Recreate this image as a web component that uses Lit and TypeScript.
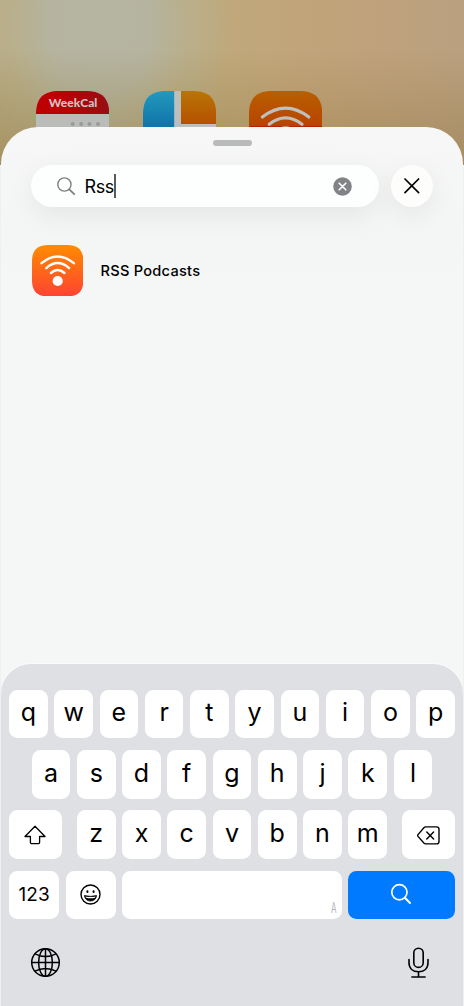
import { LitElement, html, css } from "lit";
import { customElement, property } from "lit/decorators.js";

@customElement("rss-icon")
class RssIcon extends LitElement {
  static styles = css`
    :host { display: block; }
    svg { display: block; width: 100%; height: 100%; }
  `;
  render() {
    return html`<svg viewBox="0 0 51.4 51.4">
      <defs><linearGradient id="g" x1="0" y1="0" x2="0" y2="1">
        <stop offset="0" stop-color="#ff8c00"/><stop offset="1" stop-color="#ff4332"/>
      </linearGradient></defs>
      <path fill="url(#g)" d="M16 0H35.4C46 0 51.4 5.4 51.4 16V35.4C51.4 46 46 51.4 35.4 51.4H16C5.4 51.4 0 46 0 35.4V16C0 5.4 5.4 0 16 0Z"/>
      <g fill="none" stroke="#fff" stroke-linecap="round">
        <path d="M9.5 18.2Q25.7 4.6 41.9 18.2" stroke-width="2.4"/>
        <path d="M14.3 23.1Q25.7 13.1 37.1 23.1" stroke-width="2.4"/>
        <path d="M18.9 28Q25.7 22 32.5 28" stroke-width="2.4"/>
      </g>
      <circle cx="25.7" cy="36" r="5.1" fill="#fff"/>
    </svg>`;
  }
}

@customElement("key-cap")
class KeyCap extends LitElement {
  @property() label = "";
  static styles = css`
    :host {
      display: flex; align-items: center; justify-content: center;
      box-sizing: border-box; height: 48.6px; padding-bottom: 3.6px;
      background: #fff; border-radius: 8.5px; color: #000;
      font: 400 25px/30px Inter, sans-serif;
    }
  `;
  render() {
    return html`<span>${this.label}</span>`;
  }
}

@customElement("app-root")
class AppRoot extends LitElement {
  static styles = css`
    :host {
      display: flex; flex-direction: column; height: 1006px; overflow: hidden;
      font-family: Inter, sans-serif; color: #000;
      background: #eff0f0;
    }
    svg { display: block; }
    .home {
      box-sizing: border-box; flex: none; height: 165px; padding: 91px 0 0 36.2px;
      display: flex; gap: 33.2px;
      background:
        linear-gradient(180deg, rgba(135,110,50,0) 30%, rgba(135,110,50,.4) 100%),
        radial-gradient(ellipse 130px 175px at 100px 25px, #b5b5a2 0%, rgba(181,181,162,.9) 40%, rgba(184,178,146,.55) 70%, rgba(188,174,132,0) 100%),
        linear-gradient(90deg, #b9ab82 0, #bcaa7f 190px, #c0a87b 235px, #c1a37a 330px, #baa080 464px);
    }
    .tile { flex: none; width: 73.3px; height: 73.3px; }
    .sheet {
      flex: none; box-sizing: border-box; height: 600px; margin: -37.7px .8px 0;
      border-radius: 37px 37px 0 0; padding: 13px 30.2px 0;
      background: linear-gradient(180deg, #f7f7f7 0, #f4f5f5 110px, #f5f6f6 160px, #f5f6f6 100%);
      display: flex; flex-direction: column;
    }
    .grabber { width: 39px; height: 5.6px; border-radius: 3px; background: #b9bbba; align-self: center; }
    .search { display: flex; gap: 12px; margin-top: 19.2px; }
    .field, .close {
      height: 42px; border-radius: 21px; background: #fdfefe;
      box-shadow: 0 8px 28px rgba(0,0,0,.07);
    }
    .field {
      width: 348px; box-sizing: border-box; padding: 0 27px 0 26px;
      display: flex; align-items: center;
    }
    .query { margin-left: 8.6px; font-size: 18px; line-height: 24px; letter-spacing: -.5px; padding-top: 1px; }
    .caret { width: 2px; height: 24px; background: #5a5a5a; flex: none; }
    .clear { margin-left: auto; }
    .close { width: 42px; display: grid; place-items: center; background: #fdfdfc; }
    .result { display: flex; align-items: center; gap: 17.6px; margin-top: 38px; padding-left: .6px; }
    .result rss-icon { width: 51.4px; height: 51.4px; }
    .name { font-size: 14.6px; line-height: 20px; font-weight: 550; letter-spacing: .25px; }
    .keyboard {
      flex: none; box-sizing: border-box; height: 343px; margin: -63.3px .8px 0;
      border-radius: 30px 30px 0 0; padding: 25.7px 8.2px 0; background: #dfe0e4;
      box-shadow: 0 -1px 0 #fafbfb;
      display: flex; flex-direction: column; gap: 11.8px;
    }
    .row { display: flex; gap: 6.6px; justify-content: center; }
    .row key-cap { width: 38.66px; }
    .row.spread { gap: 0; justify-content: space-between; }
    .letters { display: flex; gap: 6.6px; }
    .cap {
      box-sizing: border-box; height: 48.6px; border-radius: 8.5px; background: #fff;
      display: flex; align-items: center; justify-content: center;
    }
    .wide { width: 52.8px; padding-top: 1px; }
    .num { width: 50.3px; font-size: 19px; line-height: 24px; padding-bottom: 1px; }
    .space { width: 219.2px; justify-content: flex-end; align-items: flex-end; padding: 0 3px 4px 0; }
    .hint { font-size: 14px; line-height: 14px; color: #b4b5b8; transform: scaleX(.58); }
    .go { width: 107px; background: #007aff; padding-bottom: 3px; }
    .bar { display: flex; justify-content: space-between; align-items: center; padding: 15.4px 26px 0 21px; }
  `;

  private keys(s: string) {
    return [...s].map((k) => html`<key-cap .label=${k}></key-cap>`);
  }

  render() {
    return html`
      <div class="home">
        <svg class="tile" viewBox="0 0 73.3 73.3">
          <defs>
            <clipPath id="c"><path d="M23 0H50.3C66 0 73.3 7.3 73.3 23V73.3H0V23C0 7.3 7.3 0 23 0Z"/></clipPath>
            <linearGradient id="r"><stop offset=".3" stop-color="#bd0003"/><stop offset="1" stop-color="#960e14"/></linearGradient>
          </defs>
          <g clip-path="url(#c)">
            <rect width="73.3" height="73.3" fill="#babcb9"/>
            <rect width="73.3" height="23" fill="url(#r)"/>
            <g fill="#999b99"><circle cx="36.7" cy="33" r="2"/><circle cx="45.2" cy="33" r="2"/><circle cx="53.5" cy="33" r="2"/><circle cx="62" cy="33" r="2"/></g>
          </g>
          <text x="12.8" y="16" font-family="Lato, sans-serif" font-weight="900" font-size="12" fill="#cbc5c1" textLength="48.6">WeekCal</text>
        </svg>
        <svg class="tile" viewBox="0 0 73.3 73.3">
          <defs>
            <linearGradient id="b" x1="0" y1="0" x2="0" y2="1"><stop offset="0" stop-color="#2399bd"/><stop offset=".5" stop-color="#0f73a9"/></linearGradient>
            <linearGradient id="o" x1="0" y1="0" x2="0" y2="1"><stop offset="0" stop-color="#b87506"/><stop offset="1" stop-color="#b65100"/></linearGradient>
          </defs>
          <g clip-path="url(#c)">
            <rect width="73.3" height="73.3" fill="#bdbfbd"/>
            <rect width="31.2" height="73.3" fill="url(#b)"/>
            <rect x="38" width="35.3" height="33" fill="url(#o)"/>
          </g>
        </svg>
        <svg class="tile" viewBox="0 0 73.3 73.3">
          <defs><linearGradient id="d" x1="0" y1="0" x2="0" y2="1"><stop offset="0" stop-color="#b95f00"/><stop offset=".5" stop-color="#b74300"/></linearGradient></defs>
          <g clip-path="url(#c)">
            <rect width="73.3" height="73.3" fill="url(#d)"/>
            <rect y="35.2" width="73.3" height="3" fill="#b21d06"/>
          </g>
          <g fill="none" stroke="#bfc0bd" stroke-width="3.2" stroke-linecap="round">
            <path d="M13.4 26Q36.6 8.2 59.8 26"/><path d="M20.2 33.2Q36.6 20.6 53 33.2"/><path d="M27 40.6Q36.6 33 46.2 40.6"/>
          </g>
        </svg>
      </div>

      <div class="sheet">
        <div class="grabber"></div>
        <div class="search">
          <div class="field">
            <svg width="19" height="19" viewBox="0 0 19 19" fill="none" stroke="#7d7e80" stroke-linecap="round">
              <circle cx="7.4" cy="7.5" r="6.6" stroke-width="1.4"/><path d="M12.3 12.4L17.2 17.2" stroke-width="1.8"/>
            </svg>
            <span class="query">Rss</span><span class="caret"></span>
            <svg class="clear" width="19" height="19" viewBox="0 0 19 19">
              <circle cx="9.5" cy="9.5" r="9.3" fill="#828386"/>
              <path d="M6.2 6.2L12.8 12.8M12.8 6.2L6.2 12.8" stroke="#fff" stroke-width="1.6" stroke-linecap="round"/>
            </svg>
          </div>
          <div class="close">
            <svg width="16" height="16" viewBox="0 0 16 16" stroke="#000" stroke-width="1.7" stroke-linecap="round"><path d="M1 1L14.6 14.6M14.6 1L1 14.6"/></svg>
          </div>
        </div>
        <div class="result"><rss-icon></rss-icon><span class="name">RSS Podcasts</span></div>
      </div>

      <div class="keyboard">
        <div class="row">${this.keys("qwertyuiop")}</div>
        <div class="row">${this.keys("asdfghjkl")}</div>
        <div class="row spread">
          <div class="cap wide">
            <svg width="22" height="20" viewBox="0 0 22 20" fill="none" stroke="#000" stroke-width="1.3" stroke-linejoin="round"><path d="M11 1.3L21 11.5H15.6V17.6Q15.6 18.7 14.5 18.7H7.5Q6.4 18.7 6.4 17.6V11.5H1Z"/></svg>
          </div>
          <div class="letters">${this.keys("zxcvbnm")}</div>
          <div class="cap wide">
            <svg width="23" height="19" viewBox="0 0 23 19" fill="none" stroke="#000" stroke-width="1.4" stroke-linejoin="round" stroke-linecap="round"><path d="M8.6 .9H19.6Q22 .9 22 3.3V15.5Q22 17.9 19.6 17.9H8.6Q7.7 17.9 7.1 17.3L1 10.4Q.4 9.5 1 8.6L7.1 1.5Q7.7 .9 8.6 .9ZM9.8 5.9L16.6 12.9M16.6 5.9L9.8 12.9"/></svg>
          </div>
        </div>
        <div class="row spread">
          <div class="cap num">123</div>
          <div class="cap num">
            <svg width="21" height="21" viewBox="0 0 21 21" fill="none" stroke="#000">
              <circle cx="10.5" cy="10.5" r="9.5" stroke-width="1.4"/>
              <ellipse cx="7.4" cy="7.7" rx="1.05" ry="1.4" fill="#000" stroke="none"/><ellipse cx="13.6" cy="7.7" rx="1.05" ry="1.4" fill="#000" stroke="none"/>
              <path d="M4.4 11.6Q10.5 13.2 16.6 11.6Q15.7 17 10.5 17T4.4 11.6Z" fill="#000" stroke="#000" stroke-width=".8"/>
              <path d="M5.5 12.4Q10.5 13.6 15.5 12.4L15 13.8Q10.5 14.8 6 13.8Z" fill="#fff" stroke="none"/>
            </svg>
          </div>
          <div class="cap space"><span class="hint">A</span></div>
          <div class="cap go">
            <svg width="22" height="22" viewBox="0 0 22 22" fill="none" stroke="#fff" stroke-linecap="round"><circle cx="9.4" cy="9.2" r="7.6" stroke-width="1.7"/><path d="M14.9 14.8L20 20" stroke-width="2"/></svg>
          </div>
        </div>
        <div class="bar">
          <svg width="31" height="31" viewBox="0 0 31 31" fill="none" stroke="#000" stroke-width="1.5">
            <circle cx="15.5" cy="15.5" r="13.8"/><ellipse cx="15.5" cy="15.5" rx="6.9" ry="13.8"/>
            <path d="M15.5 1.7V29.3M1.7 15.5H29.3M4.9 6.9Q15.5 12.2 26.1 6.9M4.9 24.1Q15.5 18.8 26.1 24.1"/>
          </svg>
          <svg width="21" height="32" viewBox="0 0 21 32" fill="none" stroke="#000" stroke-width="1.6" stroke-linecap="round">
            <rect x="5.8" y="1.2" width="9.4" height="19.2" rx="4.7"/><path d="M1 12.6V15.8C1 21.6 5 24.8 10.5 24.8S20 21.6 20 15.8V12.6M10.5 24.8V30M3.9 30H17.1"/>
          </svg>
        </div>
      </div>
    `;
  }
}
